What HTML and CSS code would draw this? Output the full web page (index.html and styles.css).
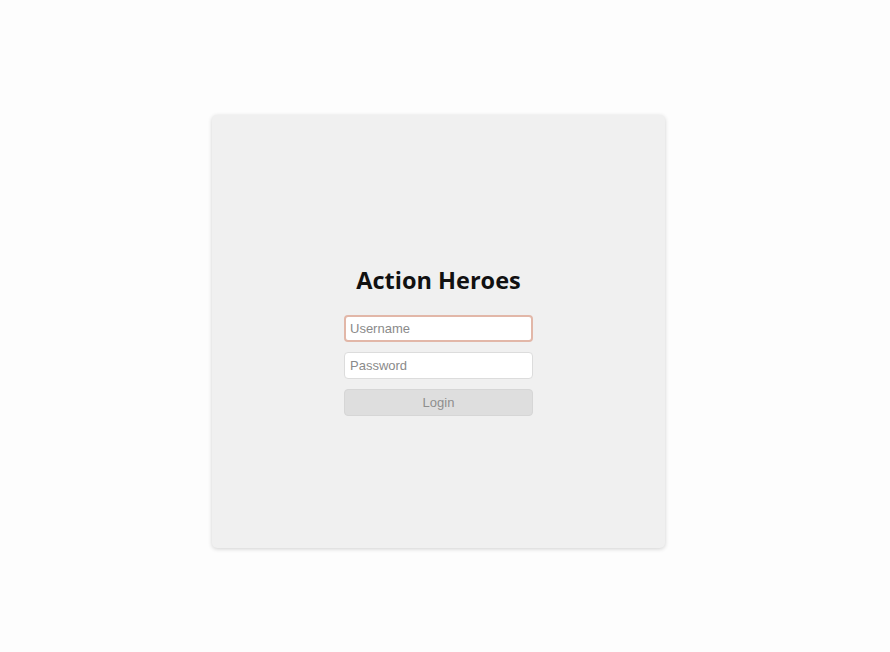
FILE: index.html
```html
<!DOCTYPE html>
<html lang="en">
<head>
    <meta charset="UTF-8">
    <meta name="viewport" content="width=device-width, initial-scale=1.0">
    <title>Action Heroes</title>
    <link rel="stylesheet" href="styles.css">
</head>
<body>
    <div class="card">
        <form class="login">
            <h1>Action Heroes</h1>
            <input type="text" class="field focused" placeholder="Username">
            <input type="password" class="field" placeholder="Password">
            <button type="button" class="btn" disabled>Login</button>
        </form>
    </div>
</body>
</html>
```

FILE: styles.css
```css
body {
    margin: 0;
    background: #fdfdfd;
    font-family: 'Liberation Sans', Arial, sans-serif;
    min-height: 652px;
}
.card {
    width: 453px;
    height: 433px;
    margin: 115px 0 0 212px;
    background: #f0f0f0;
    border-radius: 5px;
    box-shadow: 0 1px 4px rgba(0, 0, 0, 0.18);
    display: flex;
    align-items: center;
    justify-content: center;
    box-sizing: border-box;
    padding-top: 17px;
}
.login {
    width: 189px;
    display: flex;
    flex-direction: column;
    gap: 10px;
}
h1 {
    font-family: 'Open Sans', sans-serif;
    font-weight: 700;
    font-size: 23.5px;
    color: #111;
    text-align: center;
    margin: 0 -30px 9px;
}
.field {
    height: 27px;
    box-sizing: border-box;
    border: 1px solid #dcdcdc;
    border-radius: 4px;
    background: #fff;
    padding: 0 5px;
    font-family: 'Liberation Sans', Arial, sans-serif;
    font-size: 13px;
    color: #333;
    outline: none;
}
.field::placeholder {
    color: #8a8a8a;
}
.focused {
    border: 2px solid #e2b7a8;
    padding: 0 4px;
}
.btn {
    height: 27px;
    border: 1px solid #d6d6d6;
    border-radius: 4px;
    background: #dedede;
    color: #8e8e8e;
    font-family: 'Liberation Sans', Arial, sans-serif;
    font-size: 13px;
}
```
